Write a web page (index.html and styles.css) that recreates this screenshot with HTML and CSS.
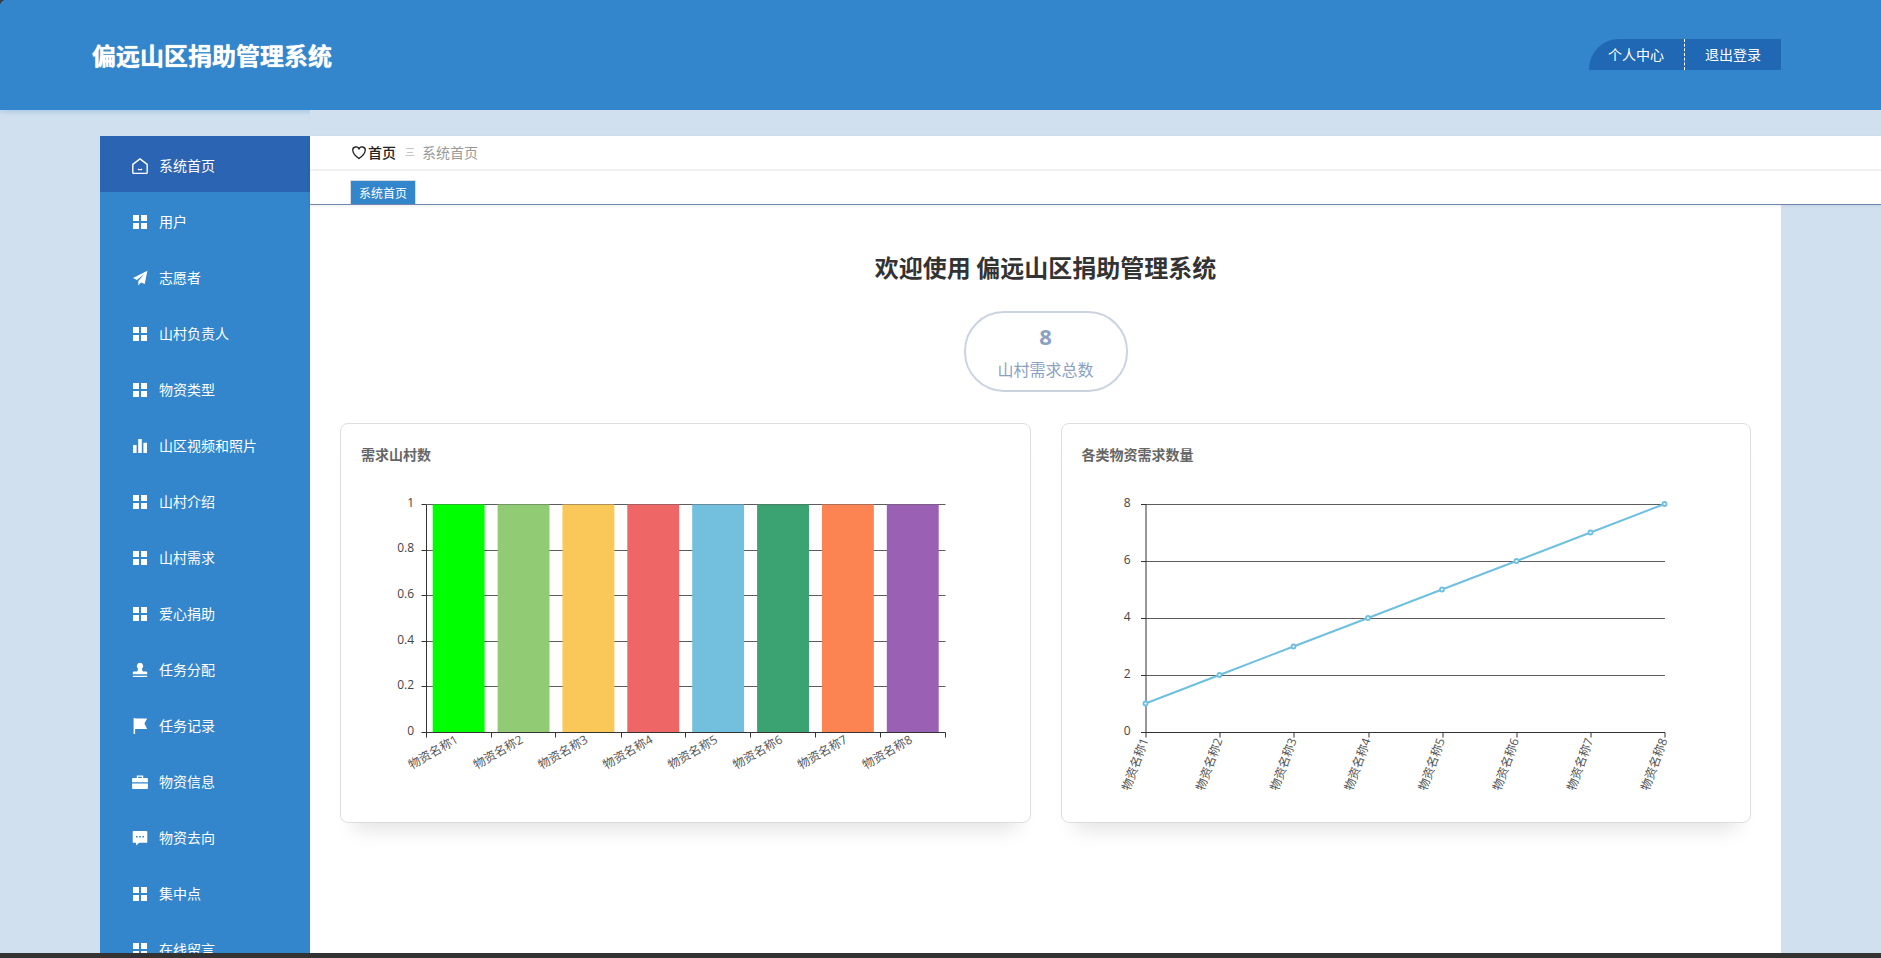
FILE: index.html
```html
<!DOCTYPE html>
<html lang="zh-CN">
<head>
<meta charset="utf-8">
<title>偏远山区捐助管理系统</title>
<link rel="stylesheet" href="styles.css">
</head>
<body>
<div class="app">
  <header class="topbar">
    <div class="brand">偏远山区捐助管理系统</div>
    <div class="topactions">
      <a class="topbtn first">个人中心</a>
      <a class="topbtn">退出登录</a>
    </div>
  </header>
  <div class="layout">
    <aside class="side-col">
      <nav class="menu">
        <a class="item active"><svg class="ico" viewBox="0 0 16 16"><path class="line" d="M8 .9 15.200 6.400V14.300a1.200 1.200 0 0 1-1.200 1.200H2a1.200 1.200 0 0 1-1.200-1.200V6.400Z"/><path class="line thin" d="M6.200 11.200q1.800 1 3.600 0"/></svg><span>系统首页</span></a>
        <a class="item"><svg class="ico" viewBox="0 0 16 16"><path class="fill" d="M1 1h6v6H1zM9 1h6v6H9zM1 9h6v6H1zM9 9h6v6H9z"/></svg><span>用户</span></a>
        <a class="item"><svg class="ico" viewBox="0 0 16 16"><path class="fill" d="M15.400 .8 1 8l3.900 1.900L12.400 4 6.300 11v4.400l2.700-2.900 3.700 1.600Z"/></svg><span>志愿者</span></a>
        <a class="item"><svg class="ico" viewBox="0 0 16 16"><path class="fill" d="M1 1h6v6H1zM9 1h6v6H9zM1 9h6v6H1zM9 9h6v6H9z"/></svg><span>山村负责人</span></a>
        <a class="item"><svg class="ico" viewBox="0 0 16 16"><path class="fill" d="M1 1h6v6H1zM9 1h6v6H9zM1 9h6v6H1zM9 9h6v6H9z"/></svg><span>物资类型</span></a>
        <a class="item"><svg class="ico" viewBox="0 0 16 16"><path class="fill" d="M1 7h3.600v8H1zM6.200 1h3.600v14H6.200zM11.400 4.700H15V15h-3.600z"/></svg><span>山区视频和照片</span></a>
        <a class="item"><svg class="ico" viewBox="0 0 16 16"><path class="fill" d="M1 1h6v6H1zM9 1h6v6H9zM1 9h6v6H1zM9 9h6v6H9z"/></svg><span>山村介绍</span></a>
        <a class="item"><svg class="ico" viewBox="0 0 16 16"><path class="fill" d="M1 1h6v6H1zM9 1h6v6H9zM1 9h6v6H1zM9 9h6v6H9z"/></svg><span>山村需求</span></a>
        <a class="item"><svg class="ico" viewBox="0 0 16 16"><path class="fill" d="M1 1h6v6H1zM9 1h6v6H9zM1 9h6v6H1zM9 9h6v6H9z"/></svg><span>爱心捐助</span></a>
        <a class="item"><svg class="ico" viewBox="0 0 16 16"><path class="fill" d="M8 .8a3.200 3.200 0 0 1 2 5.700c0 1.300.3 2.300 1 3h3.200q1 0 1 1v1.700H.8v-1.700q0-1 1-1H5c.7-.7 1-1.700 1-3A3.200 3.200 0 0 1 8 .8ZM.8 13.800h14.400v1.300H.8Z"/></svg><span>任务分配</span></a>
        <a class="item"><svg class="ico" viewBox="0 0 16 16"><path class="fill" d="M1.600 0h1.500v16H1.600zM3.100.4H15.200L12.400 5.500l2.800 5.600H3.100Z"/></svg><span>任务记录</span></a>
        <a class="item"><svg class="ico" viewBox="0 0 16 16"><path class="fill" d="M4.800 4V1.400h6.400V4H15q.9 0 .9 1v3.200H.1V5q0-.9.9-1ZM6.200 4h3.600V2.700H6.200ZM.1 9.400h15.800V14q0 1-.9 1H1q-.9 0-.9-1Z"/></svg><span>物资信息</span></a>
        <a class="item"><svg class="ico" viewBox="0 0 16 16"><path class="fill" fill-rule="evenodd" d="M1.600 1h12.800q.9 0 .9.9v10q0 .9-.9.9H7.300l-3.200 2.600v-2.600H1.600q-.9 0-.9-.9v-10q0-.9.9-.9ZM4 6h1.600v1.600H4ZM7.200 6h1.600v1.600H7.200ZM10.400 6H12v1.600h-1.600Z"/></svg><span>物资去向</span></a>
        <a class="item"><svg class="ico" viewBox="0 0 16 16"><path class="fill" d="M1 1h6v6H1zM9 1h6v6H9zM1 9h6v6H1zM9 9h6v6H9z"/></svg><span>集中点</span></a>
        <a class="item"><svg class="ico" viewBox="0 0 16 16"><path class="fill" d="M1 1h6v6H1zM9 1h6v6H9zM1 9h6v6H1zM9 9h6v6H9z"/></svg><span>在线留言</span></a>
      </nav>
    </aside>
    <main class="main-col">
      <div class="crumbbar">
        <div class="crumbs">
          <svg class="heart" viewBox="0 0 16 16"><path d="M8 14.400C3.300 10.800 1 8.400 1 5.400A3.500 3.500 0 0 1 8 3.900 3.500 3.500 0 0 1 15 5.400C15 8.400 12.700 10.800 8 14.400Z"/></svg>
          <strong class="crumb-home">首页</strong>
          <span class="crumb-sep">三</span>
          <span class="crumb-now">系统首页</span>
        </div>
        <div class="tabs"><span class="tab">系统首页</span></div>
      </div>
      <section class="content">
        <h1 class="welcome">欢迎使用 偏远山区捐助管理系统</h1>
        <div class="pill">
          <div class="pill-num">8</div>
          <div class="pill-label">山村需求总数</div>
        </div>
        <div class="cards">
          <article class="card">
            <h2 class="card-title">需求山村数</h2>
            <svg class="chart" viewBox="361 474 648 330">
              <path class="grid" d="M426.500 504.500H945.500M426.500 550.500H945.500M426.500 595.500H945.500M426.500 641.500H945.500M426.500 686.500H945.500"/>
              <rect x="432.700" y="504.500" width="51.900" height="228" fill="#00ff00"/>
              <rect x="497.600" y="504.500" width="51.900" height="228" fill="#91cc75"/>
              <rect x="562.450" y="504.500" width="51.900" height="228" fill="#fac858"/>
              <rect x="627.300" y="504.500" width="51.900" height="228" fill="#ee6666"/>
              <rect x="692.200" y="504.500" width="51.900" height="228" fill="#73c0de"/>
              <rect x="757.100" y="504.500" width="51.900" height="228" fill="#3ba272"/>
              <rect x="821.950" y="504.500" width="51.900" height="228" fill="#fc8452"/>
              <rect x="886.800" y="504.500" width="51.900" height="228" fill="#9a60b4"/>
              <path class="axis" d="M426.500 504.500V732.500M426.500 732.500H945.500M421.500 504.500H426.500M421.500 550.500H426.500M421.500 595.500H426.500M421.500 641.500H426.500M421.500 686.500H426.500M421.500 732.500H426.500M426.500 732.500V737.500M491.500 732.500V737.500M555.500 732.500V737.500M621.500 732.500V737.500M685.500 732.500V737.500M750.500 732.500V737.500M815.500 732.500V737.500M880.500 732.500V737.500M945.500 732.500V737.500"/>
              <g class="ylabel">
                <text x="414" y="506.500">1</text>
                <text x="414" y="552">0.8</text>
                <text x="414" y="597.500">0.6</text>
                <text x="414" y="643.500">0.4</text>
                <text x="414" y="689">0.2</text>
                <text x="414" y="734.500">0</text>
              </g>
              <g class="xlabel">
                <text transform="translate(459 742) rotate(-30)">物资名称1</text>
                <text transform="translate(523.900 742) rotate(-30)">物资名称2</text>
                <text transform="translate(588.750 742) rotate(-30)">物资名称3</text>
                <text transform="translate(653.600 742) rotate(-30)">物资名称4</text>
                <text transform="translate(718.500 742) rotate(-30)">物资名称5</text>
                <text transform="translate(783.400 742) rotate(-30)">物资名称6</text>
                <text transform="translate(848.250 742) rotate(-30)">物资名称7</text>
                <text transform="translate(913.100 742) rotate(-30)">物资名称8</text>
              </g>
            </svg>
          </article>
          <article class="card">
            <h2 class="card-title">各类物资需求数量</h2>
            <svg class="chart" viewBox="1082.500 474 648 330">
              <path class="grid" d="M1146.500 504.500H1665.500M1146.500 561.500H1665.500M1146.500 618.500H1665.500M1146.500 675.500H1665.500"/>
              <path class="axis" d="M1146.500 504.500V732.500M1146.500 732.500H1665.500M1141.500 504.500H1146.500M1141.500 561.500H1146.500M1141.500 618.500H1146.500M1141.500 675.500H1146.500M1141.500 732.500H1146.500M1146.500 732.500V737.500M1220.500 732.500V737.500M1294.500 732.500V737.500M1369.500 732.500V737.500M1443.500 732.500V737.500M1517.500 732.500V737.500M1591.500 732.500V737.500M1665.500 732.500V737.500"/>
              <g class="ylabel">
                <text x="1131" y="506.500">8</text>
                <text x="1131" y="563.500">6</text>
                <text x="1131" y="620.500">4</text>
                <text x="1131" y="677.500">2</text>
                <text x="1131" y="734.500">0</text>
              </g>
              <polyline class="series" points="1146,703.500 1220,675 1294,646.500 1368.500,618 1442.500,589.500 1517,561 1591,532.500 1665,504"/>
              <g class="dots">
                <circle cx="1146" cy="703.500" r="2"/><circle cx="1220" cy="675" r="2"/><circle cx="1294" cy="646.500" r="2"/><circle cx="1368.500" cy="618" r="2"/><circle cx="1442.500" cy="589.500" r="2"/><circle cx="1517" cy="561" r="2"/><circle cx="1591" cy="532.500" r="2"/><circle cx="1665" cy="504" r="2"/>
              </g>
              <g class="xlabel">
                <text transform="translate(1149 740) rotate(-70)">物资名称1</text>
                <text transform="translate(1223.100 740) rotate(-70)">物资名称2</text>
                <text transform="translate(1297.300 740) rotate(-70)">物资名称3</text>
                <text transform="translate(1371.400 740) rotate(-70)">物资名称4</text>
                <text transform="translate(1445.600 740) rotate(-70)">物资名称5</text>
                <text transform="translate(1519.700 740) rotate(-70)">物资名称6</text>
                <text transform="translate(1593.900 740) rotate(-70)">物资名称7</text>
                <text transform="translate(1668 740) rotate(-70)">物资名称8</text>
              </g>
            </svg>
          </article>
        </div>
      </section>
    </main>
  </div>
</div>
<div class="corner"></div>
<div class="bottom-strip"></div>
</body>
</html>
```

FILE: styles.css
```css
* { box-sizing: border-box; }
html, body { margin: 0; height: 100%; overflow: hidden; }
body {
  font-family: "Noto Sans CJK SC", "Microsoft YaHei", sans-serif;
  background: #d1e0ef;
  color: #333;
}
.app { height: 958px; display: flex; flex-direction: column; overflow: hidden; }

.topbar {
  flex: none;
  height: 110px;
  background: #3386cb;
  display: flex;
  align-items: center;
  justify-content: space-between;
  padding: 0 100px 0 92px;
  box-shadow: 0 2px 5px rgba(51, 134, 203, 0.25);
}
.brand { font-size: 24px; font-weight: 700; color: #fff; line-height: 34px; text-shadow: 0 0 1px #fff; }
.topactions { display: flex; height: 31px; margin-top: -1px; }
.topbtn {
  width: 96px;
  height: 31px;
  background: #2068b3;
  color: #fff;
  font-size: 14px;
  line-height: 30px;
  text-align: center;
}
.topbtn.first { border-top-left-radius: 30px; border-right: 1px dashed #fff; padding-right: 1px; }

.layout { flex: 1; display: flex; min-height: 0; }
.side-col { flex: none; width: 310px; padding: 26px 0 0 100px; }
.menu { width: 210px; background: #3386cb; }
.item {
  display: flex;
  align-items: center;
  gap: 12px;
  height: 56px;
  padding: 4px 0 0 32px;
  color: #fff;
  font-size: 14px;
  line-height: 20px;
}
.item span { margin: -2px 0 0 -1px; }
.item.active { background: #2b64b3; }
.ico { width: 16px; height: 16px; flex: none; }
.ico .fill { fill: #fff; }
.ico .line { fill: none; stroke: #fff; stroke-width: 1.4; stroke-linejoin: round; }
.ico .thin { stroke-width: 1.1; stroke-linecap: round; }

.main-col {
  flex: 1;
  min-width: 0;
  background: #d1e0ef;
  padding-top: 26px;
  display: flex;
  flex-direction: column;
  position: relative;
}
.crumbbar {
  flex: none;
  height: 69px;
  background: #fff;
  border-bottom: 1px solid #7088ad;
  box-shadow: 0 1px 3px rgba(0, 0, 0, 0.08);
  position: relative;
  z-index: 1;
}
.crumbs {
  height: 35px;
  border-bottom: 2px solid #f0f0f0;
  display: flex;
  align-items: center;
  padding-left: 42px;
  font-size: 14px;
  line-height: 20px;
}
.heart { width: 14px; height: 14px; margin-right: 2px; }
.heart path { fill: none; stroke: #222; stroke-width: 1.5; }
.crumb-home { color: #222; font-weight: 500; margin-top: -2px; }
.crumb-sep { color: #bbb; font-size: 10px; margin: -2px 8px 0 9px; width: 9px; }
.crumb-now { color: #999; margin-top: -2px; }
.tabs { padding: 9px 0 0 40px; display: flex; }
.tab {
  width: 66px;
  height: 24px;
  background: #3386cb;
  border: 1px solid #d8dce5;
  border-bottom: 0;
  color: #fff;
  font-size: 12px;
  line-height: 24px;
  text-align: center;
}

.content {
  flex: 1;
  width: 1471px;
  background: #fff;
  padding: 45px 30px 0;
}
.welcome {
  margin: 0;
  font-size: 24px;
  font-weight: 700;
  line-height: 34px;
  color: #333;
  text-align: center;
}
.pill {
  width: 164px;
  height: 81px;
  margin: 27px auto 0;
  border: 2px solid #ccd3e0;
  border-radius: 40px;
  text-align: center;
}
.pill-num { font-family: "Open Sans", "Noto Sans CJK SC", sans-serif; font-size: 22px; font-weight: 700; line-height: 28px; margin-top: 9px; color: #8aa1c1; }
.pill-label { font-size: 16px; line-height: 24px; margin-top: 7px; color: #8aa1c1; }

.cards { display: flex; gap: 30px; margin-top: 31px; }
.card {
  flex: 1;
  height: 400px;
  padding: 19px 20px 20px;
  background: #fff;
  border: 1px solid #dedede;
  border-radius: 8px;
  box-shadow: 0 20px 20px -14px rgba(0, 0, 0, 0.12);
}
.card-title { margin: 0; font-size: 14px; font-weight: 700; line-height: 22px; color: #666; }
.chart { display: block; width: 648px; height: 330px; margin-top: 9px; }
.grid { fill: none; stroke: #5c5c5c; stroke-width: 1; }
.axis { fill: none; stroke: #333; stroke-width: 1; }
.ylabel text { font-family: "Open Sans", "Noto Sans CJK SC", sans-serif; font-size: 12px; fill: #444; text-anchor: end; }
.xlabel text { font-family: "Open Sans", "Noto Sans CJK SC", sans-serif; font-size: 12px; fill: #555; text-anchor: end; }
.series { fill: none; stroke: #6fbfe0; stroke-width: 2; }
.dots circle { fill: #fff; stroke: #6fbfe0; stroke-width: 1.8; }

.corner {
  position: fixed;
  left: 0;
  top: 0;
  width: 5px;
  height: 5px;
  background: radial-gradient(circle at 100% 100%, transparent 4.5px, #3a3a3a 5px);
}
.bottom-strip {
  position: fixed;
  left: 0;
  right: 0;
  bottom: 0;
  height: 5px;
  background: #333;
}
```
